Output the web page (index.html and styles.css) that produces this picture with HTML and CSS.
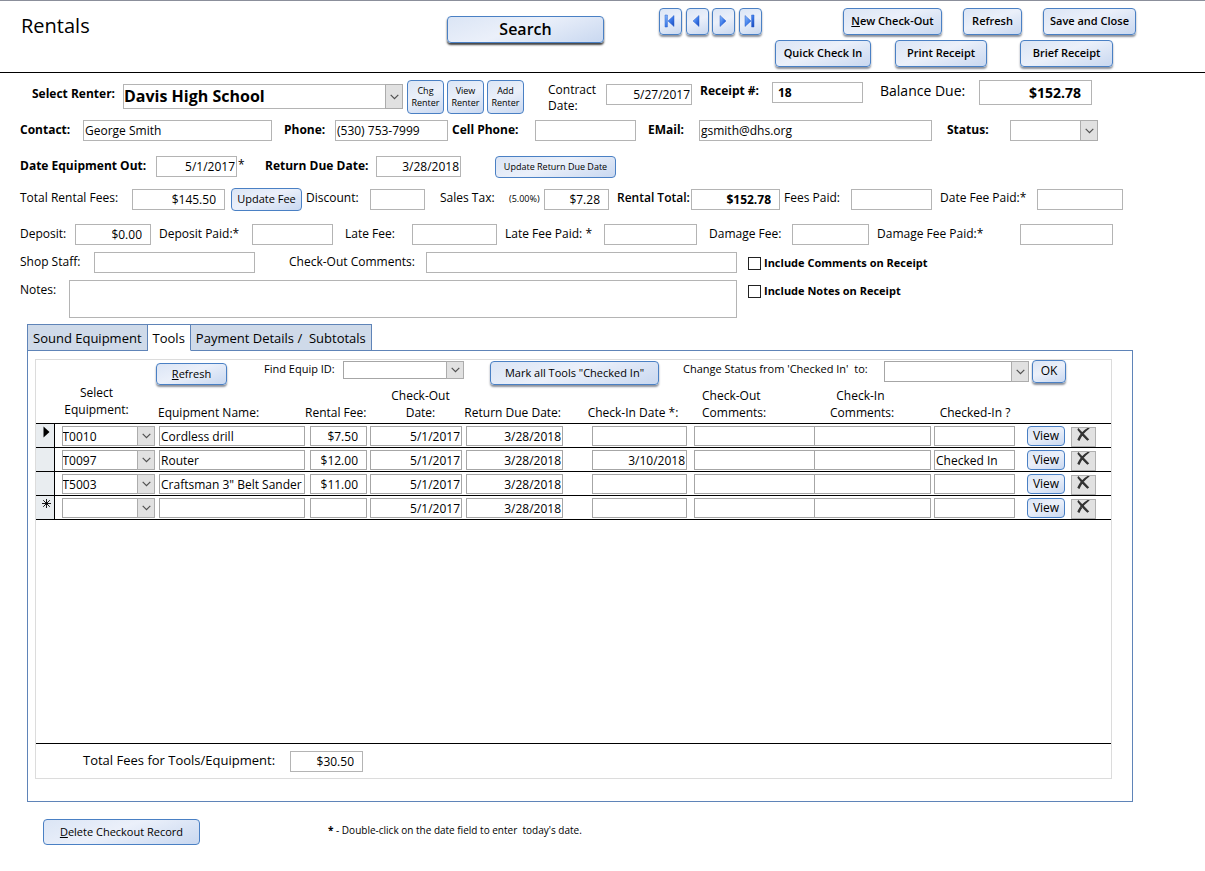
FILE: index.html
```html
<!DOCTYPE html>
<html lang="en">
<head>
<meta charset="utf-8">
<meta name="viewport" content="width=device-width, initial-scale=1">
<title>Rentals</title>
<link rel="stylesheet" href="styles.css">
</head>
<body>
<svg class="defs" aria-hidden="true">
  <defs>
    <linearGradient id="blue" x1="0" x2="1" y1="0" y2="1">
      <stop offset="0" stop-color="#8fc0ff"/><stop offset="0.55" stop-color="#3b78e8"/><stop offset="1" stop-color="#1745b8"/>
    </linearGradient>
    <symbol id="chevron" viewBox="0 0 9 6"><path d="M0.7 0.8 L4.5 4.6 L8.3 0.8" fill="none" stroke="#505050" stroke-width="1.2"/></symbol>
    <symbol id="cross" viewBox="0 0 13 14"><path d="M1 1 C3 3 8 8.5 11.8 12.2 L10.8 13 C7 9.5 2.5 4.5 0.6 1.8 Z M12 0.6 C8.5 3 4 8.3 1.8 13.2 L0.6 12.4 C3 7 7.5 2.5 11.4 0.4 Z" fill="#333" stroke="#333" stroke-width="1.2"/></symbol>
  </defs>
</svg>

<header class="top">
  <h1 class="title">Rentals</h1>
  <button class="btn raised search" type="button">Search</button>
  <nav class="records" aria-label="Records">
    <button class="btn raised nav" type="button" aria-label="First record"><svg width="12" height="14" viewBox="0 0 12 14"><path d="M1 1h2.4v12H1zM10 1.5v11L4 7z" fill="url(#blue)" stroke="#2a60cf" stroke-width="0.5"/></svg></button>
    <button class="btn raised nav" type="button" aria-label="Previous record"><svg width="12" height="14" viewBox="0 0 12 14"><path d="M9 1.5v11L3 7z" fill="url(#blue)" stroke="#2a60cf" stroke-width="0.5"/></svg></button>
    <button class="btn raised nav" type="button" aria-label="Next record"><svg width="12" height="14" viewBox="0 0 12 14"><path d="M3 1.5v11L9 7z" fill="url(#blue)" stroke="#2a60cf" stroke-width="0.5"/></svg></button>
    <button class="btn raised nav" type="button" aria-label="Last record"><svg width="12" height="14" viewBox="0 0 12 14"><path d="M8.6 1H11v12H8.6zM2 1.5v11L8 7z" fill="url(#blue)" stroke="#2a60cf" stroke-width="0.5"/></svg></button>
  </nav>
  <div class="actions">
    <div class="actions-upper">
      <button class="btn raised action" type="button"><u>N</u>ew Check-Out</button>
      <button class="btn raised action" type="button">Refresh</button>
      <button class="btn raised action" type="button">Save and Close</button>
    </div>
    <div class="actions-lower">
      <button class="btn raised action" type="button">Quick Check In</button>
      <button class="btn raised action" type="button">Print Receipt</button>
      <button class="btn raised action" type="button">Brief Receipt</button>
    </div>
  </div>
</header>

<main>
<form class="details">
  <div class="row row-renter">
    <label class="strong low" for="renter">Select Renter:</label>
    <span class="combo big low"><select id="renter"><option>Davis High School</option></select><span class="drop"><svg width="9" height="6"><use href="#chevron"/></svg></span></span>
    <div class="renter-buttons">
      <button class="btn small" type="button">Chg Renter</button>
      <button class="btn small" type="button">View Renter</button>
      <button class="btn small" type="button">Add Renter</button>
    </div>
    <label class="two-line" for="contract">Contract Date:</label>
    <input class="field date low" id="contract" value="5/27/2017">
    <label class="strong receipt-label" for="receipt">Receipt #:</label>
    <input class="field bold receipt" id="receipt" value="18">
    <label class="large" for="balance">Balance Due:</label>
    <input class="field money balance" id="balance" value="$152.78">
  </div>

  <div class="row row-contact">
    <label class="strong flush" for="contact">Contact:</label>
    <input class="field" id="contact" value="George Smith">
    <label class="strong gap-m" for="phone">Phone:</label>
    <input class="field" id="phone" value="(530) 753-7999">
    <label class="strong gap-xs" for="cell">Cell Phone:</label>
    <input class="field" id="cell">
    <label class="strong gap-m" for="email">EMail:</label>
    <input class="field" id="email" value="gsmith@dhs.org">
    <label class="strong gap-l" for="status">Status:</label>
    <span class="combo"><select id="status"><option></option></select><span class="drop"><svg width="9" height="6"><use href="#chevron"/></svg></span></span>
  </div>

  <div class="row row-dates">
    <label class="strong flush" for="out">Date Equipment Out:</label>
    <input class="field date" id="out" value="5/1/2017">
    <span class="star">*</span>
    <label class="strong flush" for="due">Return Due Date:</label>
    <input class="field date" id="due" value="3/28/2018">
    <button class="btn small update-due" type="button">Update Return Due Date</button>
  </div>

  <div class="row row-fees">
    <label class="flush" for="fees">Total Rental Fees:</label>
    <input class="field money" id="fees" value="$145.50">
    <button class="btn update-fee" type="button">Update Fee</button>
    <label class="gap-xs" for="discount">Discount:</label>
    <input class="field" id="discount">
    <label class="gap-l" for="tax">Sales Tax:</label>
    <span class="rate">(5.00%)</span>
    <input class="field money" id="tax" value="$7.28">
    <label class="medium gap-s" for="total">Rental Total:</label>
    <input class="field money bold" id="total" value="$152.78">
    <label class="gap-xs" for="paid">Fees Paid:</label>
    <input class="field" id="paid">
    <label class="gap-s" for="paid-date">Date Fee Paid:*</label>
    <input class="field" id="paid-date">
  </div>

  <div class="row row-deposit">
    <label class="flush" for="deposit">Deposit:</label>
    <input class="field money" id="deposit" value="$0.00">
    <label class="gap-s" for="deposit-paid">Deposit Paid:*</label>
    <input class="field" id="deposit-paid">
    <label class="gap-m" for="late">Late Fee:</label>
    <input class="field" id="late">
    <label class="gap-s" for="late-paid">Late Fee Paid: *</label>
    <input class="field" id="late-paid">
    <label class="gap-m" for="damage">Damage Fee:</label>
    <input class="field" id="damage">
    <label class="gap-s" for="damage-paid">Damage Fee Paid:*</label>
    <input class="field" id="damage-paid">
  </div>

  <div class="row row-staff">
    <label class="flush" for="staff">Shop Staff:</label>
    <input class="field" id="staff">
    <label class="gap-xl" for="comments">Check-Out Comments:</label>
    <input class="field" id="comments">
    <label class="check"><input type="checkbox">Include Comments on Receipt</label>
  </div>

  <div class="row row-notes">
    <label class="flush" for="notes">Notes:</label>
    <textarea class="field notes" id="notes"></textarea>
    <label class="check"><input type="checkbox">Include Notes on Receipt</label>
  </div>
</form>

<section class="equipment">
  <div class="tabs" role="tablist">
    <button class="tab" role="tab" type="button" aria-selected="false">Sound Equipment</button>
    <button class="tab" role="tab" type="button" aria-selected="true">Tools</button>
    <button class="tab" role="tab" type="button" aria-selected="false">Payment Details /&nbsp; Subtotals</button>
  </div>
  <div class="panel" role="tabpanel">
    <div class="sheet">
      <div class="tools">
        <button class="btn raised tool-refresh" type="button"><u>R</u>efresh</button>
        <label class="find" for="find">Find Equip ID:</label>
        <span class="combo dark short"><select id="find"><option></option></select><span class="drop"><svg width="9" height="6"><use href="#chevron"/></svg></span></span>
        <button class="btn raised mark" type="button">Mark all Tools "Checked In"</button>
        <label class="change" for="change">Change Status from 'Checked In'&nbsp; to:</label>
        <span class="combo dark"><select id="change"><option></option></select><span class="drop"><svg width="9" height="6"><use href="#chevron"/></svg></span></span>
        <button class="btn raised ok" type="button">OK</button>
      </div>

      <table class="grid">
        <colgroup><col class="c-mark"><col class="c-id"><col class="c-name"><col class="c-fee"><col class="c-out"><col class="c-due"><col class="c-in"><col class="c-outc"><col class="c-inc"><col class="c-state"><col class="c-view"><col class="c-del"><col class="c-end"></colgroup>
        <thead>
          <tr>
            <th></th>
            <th class="up">Select<br>Equipment:</th>
            <th class="left">Equipment Name:</th>
            <th class="right">Rental Fee:</th>
            <th>Check-Out<br>Date:</th>
            <th class="right">Return Due Date:</th>
            <th class="in-date">Check-In Date *:</th>
            <th class="left wide">Check-Out<br>Comments:</th>
            <th class="left wide">&nbsp; Check-In<br>Comments:</th>
            <th class="state">Checked-In ?</th>
            <th></th><th></th><th></th>
          </tr>
        </thead>
        <tbody>
          <tr>
            <td class="mark-cell"><svg width="7" height="12" viewBox="0 0 7 12"><path d="M0.5 0.5v11L6.5 6z"/></svg></td>
            <td class="p-id"><span class="combo dark"><select aria-label="Equipment"><option>T0010</option></select><span class="drop"><svg width="9" height="6"><use href="#chevron"/></svg></span></span></td>
            <td class="p-name"><input class="field" aria-label="Name" value="Cordless drill"></td>
            <td class="p-fee"><input class="field money" aria-label="Fee" value="$7.50"></td>
            <td class="p-out"><input class="field date" aria-label="Out" value="5/1/2017"></td>
            <td class="p-due"><input class="field date" aria-label="Due" value="3/28/2018"></td>
            <td class="p-in"><input class="field date" aria-label="In"></td>
            <td class="p-outc"><input class="field" aria-label="Check-out comments"></td>
            <td class="p-inc"><input class="field" aria-label="Check-in comments"></td>
            <td class="p-state"><input class="field" aria-label="Checked in"></td>
            <td class="p-view"><button class="btn view" type="button">View</button></td>
            <td class="p-del"><button class="del" type="button" aria-label="Delete"><svg width="13" height="13"><use href="#cross"/></svg></button></td>
            <td></td>
          </tr>
          <tr>
            <td class="mark-cell"></td>
            <td class="p-id"><span class="combo dark"><select aria-label="Equipment"><option>T0097</option></select><span class="drop"><svg width="9" height="6"><use href="#chevron"/></svg></span></span></td>
            <td class="p-name"><input class="field" aria-label="Name" value="Router"></td>
            <td class="p-fee"><input class="field money" aria-label="Fee" value="$12.00"></td>
            <td class="p-out"><input class="field date" aria-label="Out" value="5/1/2017"></td>
            <td class="p-due"><input class="field date" aria-label="Due" value="3/28/2018"></td>
            <td class="p-in"><input class="field date" aria-label="In" value="3/10/2018"></td>
            <td class="p-outc"><input class="field" aria-label="Check-out comments"></td>
            <td class="p-inc"><input class="field" aria-label="Check-in comments"></td>
            <td class="p-state"><input class="field" aria-label="Checked in" value="Checked In"></td>
            <td class="p-view"><button class="btn view" type="button">View</button></td>
            <td class="p-del"><button class="del" type="button" aria-label="Delete"><svg width="13" height="13"><use href="#cross"/></svg></button></td>
            <td></td>
          </tr>
          <tr>
            <td class="mark-cell"></td>
            <td class="p-id"><span class="combo dark"><select aria-label="Equipment"><option>T5003</option></select><span class="drop"><svg width="9" height="6"><use href="#chevron"/></svg></span></span></td>
            <td class="p-name"><input class="field" aria-label="Name" value="Craftsman 3&quot; Belt Sander"></td>
            <td class="p-fee"><input class="field money" aria-label="Fee" value="$11.00"></td>
            <td class="p-out"><input class="field date" aria-label="Out" value="5/1/2017"></td>
            <td class="p-due"><input class="field date" aria-label="Due" value="3/28/2018"></td>
            <td class="p-in"><input class="field date" aria-label="In"></td>
            <td class="p-outc"><input class="field" aria-label="Check-out comments"></td>
            <td class="p-inc"><input class="field" aria-label="Check-in comments"></td>
            <td class="p-state"><input class="field" aria-label="Checked in"></td>
            <td class="p-view"><button class="btn view" type="button">View</button></td>
            <td class="p-del"><button class="del" type="button" aria-label="Delete"><svg width="13" height="13"><use href="#cross"/></svg></button></td>
            <td></td>
          </tr>
          <tr>
            <td class="mark-cell"><svg width="9" height="9" viewBox="0 0 9 9"><path d="M4.5 0v9M0 4.5h9M1.2 1.2l6.6 6.6M7.8 1.2L1.2 7.8" stroke="#000" stroke-width="0.9"/></svg></td>
            <td class="p-id"><span class="combo dark"><select aria-label="Equipment"><option></option></select><span class="drop"><svg width="9" height="6"><use href="#chevron"/></svg></span></span></td>
            <td class="p-name"><input class="field" aria-label="Name"></td>
            <td class="p-fee"><input class="field money" aria-label="Fee"></td>
            <td class="p-out"><input class="field date" aria-label="Out" value="5/1/2017"></td>
            <td class="p-due"><input class="field date" aria-label="Due" value="3/28/2018"></td>
            <td class="p-in"><input class="field date" aria-label="In"></td>
            <td class="p-outc"><input class="field" aria-label="Check-out comments"></td>
            <td class="p-inc"><input class="field" aria-label="Check-in comments"></td>
            <td class="p-state"><input class="field" aria-label="Checked in"></td>
            <td class="p-view"><button class="btn view" type="button">View</button></td>
            <td class="p-del"><button class="del" type="button" aria-label="Delete"><svg width="13" height="13"><use href="#cross"/></svg></button></td>
            <td></td>
          </tr>
        </tbody>
      </table>

      <div class="sum">
        <label for="sum">Total Fees for Tools/Equipment:</label>
        <input class="field money" id="sum" value="$30.50">
      </div>
    </div>
  </div>
</section>
</main>

<footer class="bottom">
  <button class="btn delete" type="button"><u>D</u>elete Checkout Record</button>
  <p class="hint"><b>*</b> - Double-click on the date field to enter&nbsp; today's date.</p>
</footer>
</body>
</html>
```

FILE: styles.css
```css
* { box-sizing: border-box; }

body {
  margin: 0;
  border-top: 1px solid #8b8f9b;
  background: #fff;
  color: #000;
  font: 12px/20px "Open Sans", "Noto Sans", sans-serif;
}

.defs { display: block; width: 0; height: 0; }

input, select, textarea, button { font: inherit; color: inherit; margin: 0; }

/* Buttons */
.btn {
  display: flex;
  align-items: center;
  justify-content: center;
  padding: 0 0 1px;
  border: 1px solid #4a80c4;
  border-radius: 4px;
  background: linear-gradient(160deg, #dbe5f5 0%, #ebf0fa 45%, #c9d8f0 100%);
  line-height: 16px;
  white-space: nowrap;
}
.raised { box-shadow: 0 2px 2px #8d929c; }
.small { font-size: 9px; line-height: 12px; }

/* Header */
.top {
  display: grid;
  grid-template-columns: 426fr 157px 55px 103px 13px 361px 48fr;
  align-items: start;
  height: 72px;
  padding: 7px 21px 0;
  border-bottom: 1px solid #000;
}
.title { margin: 5px 0 0; font-size: 20px; line-height: 26px; font-weight: 500; }
.search {
  height: 27px;
  margin-top: 8px;
  padding-bottom: 2px;
  font-size: 16px;
  font-weight: 600;
  box-shadow: 0 2px 2px #444;
}
.records { grid-column: 4; display: flex; justify-content: space-between; }
.nav { width: 23px; height: 27px; padding: 0 2px 1px 0; }
.actions { grid-column: 6; display: grid; gap: 5px; }
.actions-upper { display: grid; grid-template-columns: 99px 59px 93px; gap: 21px; padding-left: 68px; }
.actions-lower { display: grid; grid-template-columns: 96px 92px 93px; column-gap: 24px; }
.actions-lower .action:last-child { margin: 0 -9px 0 9px; }
.action { height: 27px; padding-bottom: 2px; font-size: 11px; font-weight: 600; }

/* Fields */
.field, .combo select {
  display: block;
  width: 100%;
  min-width: 0;
  height: 21px;
  padding: 0 1px;
  border: 1px solid #b4b4b4;
  border-radius: 0;
  background: #fff;
  line-height: 17px;
}
.combo select { padding: 0; }
.date { text-align: right; }
.money { text-align: right; padding-right: 8px; }
.bold { font-weight: 700; }
.combo { display: grid; }
.combo select { grid-area: 1 / 1; appearance: none; }
.drop {
  grid-area: 1 / 1;
  justify-self: end;
  display: grid;
  place-items: center;
  width: 18px;
  border: 1px solid #acacac;
  background: #e1e1e1;
  pointer-events: none;
}
.dark select, .grid .field { border-color: #a6a6a6; }
.big select { height: 25px; font-size: 16px; line-height: 23px; font-weight: 700; }

/* Record details */
.details { display: grid; gap: 6px; padding: 7px 0 0 20px; }
.row { display: grid; align-items: start; }
.row > label { white-space: nowrap; padding-left: 12px; }
.row > .flush { padding-left: 0; }
.row > .gap-xs { padding-left: 4px; }
.row > .gap-s { padding-left: 8px; }
.row > .gap-m { padding-left: 12px; }
.row > .gap-l { padding-left: 15px; }
.row > .gap-xl { padding-left: 34px; }
.strong { font-weight: 700; }
.medium { font-weight: 600; }
.large { font-size: 14px; }
.low { margin-top: 4px; }

.row-renter {
  grid-template-columns: 103px 280fr 121px 82px 86fr 80px 91fr 116px 113fr;
  padding-right: 113px;
}
.row > .two-line { padding: 2px 20px 0 24px; line-height: 16px; white-space: normal; }
.row > .receipt-label { padding: 1px 0 0 8px; }
.row-renter > .large { padding: 1px 0 0 17px; }
.renter-buttons { display: grid; grid-template-columns: repeat(3, 37px); gap: 3px; padding-left: 4px; }
.renter-buttons .btn { height: 34px; white-space: normal; }
.receipt { margin-top: 2px; padding-left: 5px; }
.balance { height: 25px; font-size: 14px; font-weight: 700; padding-right: 10px; }

.row-contact {
  grid-template-columns: 63px 189fr 63px 113fr 87px 101fr 63px 233fr 78px 88fr;
  padding-right: 107px;
}
.row-dates {
  grid-template-columns: 136px 81fr 28px 111px 85fr 34px 121px 468fr;
  margin-top: 9px;
  padding-right: 121px;
}
.row > .star { padding-left: 1px; line-height: 18px; }
.update-due { grid-column: 7; height: 22px; }

.row-fees {
  grid-template-columns: 112px 93fr 6px 71px 68px 55fr 84px 35px 65fr 82px 89fr 71px 81fr 105px 86fr;
  margin-top: 4px;
  padding-right: 82px;
}
.row-fees .field { margin-top: 1px; }
.update-fee { grid-column: 4; height: 23px; font-size: 11px; font-weight: 500; }
.rate { font-size: 9px; line-height: 22px; }

.row-deposit {
  grid-template-columns: 55px 76fr 101px 81fr 79px 85fr 107px 93fr 95px 77fr 151px 93fr;
  margin-top: 7px;
  padding-right: 92px;
}
.row-staff, .row-notes { margin-top: 1px; }
.row-staff { grid-template-columns: 74px 161fr 171px 311fr 468px; }
.row-notes { grid-template-columns: 49px 668fr 468px; }
.notes { height: 38px; resize: none; }
.row > .check {
  display: flex;
  align-items: center;
  gap: 3px;
  padding: 1px 0 0 11px;
  font-size: 11px;
  font-weight: 700;
}
.check input { appearance: none; width: 13px; height: 13px; border: 1px solid #222; background: #fff; }

/* Tabs */
.equipment { padding: 6px 72px 0 27px; }
.tabs { display: flex; }
.tab {
  height: 27px;
  margin-bottom: -1px;
  padding: 0 5px;
  border: 1px solid #5f84b8;
  border-left-width: 0;
  background: #cfdae9;
  font-size: 13px;
  font-weight: 500;
}
.tab:first-child { border-left-width: 1px; }
.tab[aria-selected="true"] { background: #fff; border-bottom-color: #fff; }
.panel { border: 1px solid #5f84b8; padding: 8px 20px 22px 7px; }
.sheet { border: 1px solid #dcdcdc; }

.tools {
  display: grid;
  grid-template-columns: 120fr 71px 116px 121fr 26px 169px 225px 145fr 3px 34px 45fr;
  align-items: start;
  height: 24px;
}
.tool-refresh { grid-column: 2; height: 22px; margin-top: 3px; font-size: 11px; }
.find, .change { font-size: 11px; line-height: 18px; white-space: nowrap; }
.find { padding-left: 37px; }
.change { padding-left: 24px; }
.tools .combo { margin-top: 1px; }
.short select { height: 18px; }
.mark { grid-column: 6; height: 24px; margin-top: 1px; font-size: 11px; }
.ok { grid-column: 10; height: 23px; }

/* Equipment table */
.grid { width: 100%; table-layout: fixed; border-collapse: collapse; }
.c-mark { width: 18px; }
.c-id { width: 101px; }
.c-name { width: 150px; }
.c-fee { width: 62px; }
.c-out { width: 95px; }
.c-due { width: 101px; }
.c-in { width: 124px; }
.c-outc { width: 128px; }
.c-inc { width: 116px; }
.c-state { width: 84px; }
.c-view { width: 50px; }
.c-del { width: 31px; }
.c-end { width: 15px; }
.grid th {
  height: 35px;
  padding: 0 0 2px 12px;
  font-weight: 400;
  line-height: 17px;
  vertical-align: bottom;
  white-space: nowrap;
}
.grid .up { padding: 0 16px 5px 0; }
.grid .left { padding-left: 3px; text-align: left; }
.grid .wide { padding-left: 15px; }
.grid .right { padding: 0 2px 2px 0; text-align: right; }
.grid .in-date { padding-left: 16px; }
.grid .state { padding-left: 4px; }
.grid td { height: 24px; padding: 2px 0 0; border: solid #000; border-width: 1px 0; vertical-align: top; }
.grid .mark-cell { padding-left: 3px; border-right-width: 1px; background: #e9edf0; text-align: center; line-height: 12px; }
.grid .field, .grid select { height: 20px; }
.grid .p-id { padding-left: 7px; }
.grid .p-name, .grid .p-due { padding-left: 4px; }
.grid .p-fee { padding-left: 5px; }
.grid .p-out, .grid .p-state { padding-left: 3px; }
.grid .p-in { padding-left: 29px; }
.grid .p-outc { padding-left: 7px; }
.p-inc .field { border-left-width: 0; }
.grid .p-view { padding-left: 12px; }
.grid .p-del { padding: 3px 0 0 6px; }
.view { width: 38px; height: 20px; padding: 0; }
.del {
  display: grid;
  justify-items: center;
  width: 25px;
  height: 20px;
  padding: 0;
  border: 1px solid #b0b0b0;
  background: #e1e1e1;
}

.sum {
  display: grid;
  grid-template-columns: 254px 73px;
  margin-top: 223px;
  padding: 7px 0 6px;
  border-top: 1px solid #000;
}
.sum label { padding-left: 47px; font-size: 13px; line-height: 18px; }

/* Footer */
.bottom { display: flex; align-items: flex-start; gap: 128px; padding: 17px 43px 24px; }
.delete { width: 157px; height: 26px; font-size: 11px; }
.hint { margin: 1px 0 0; font-size: 10px; }
```
